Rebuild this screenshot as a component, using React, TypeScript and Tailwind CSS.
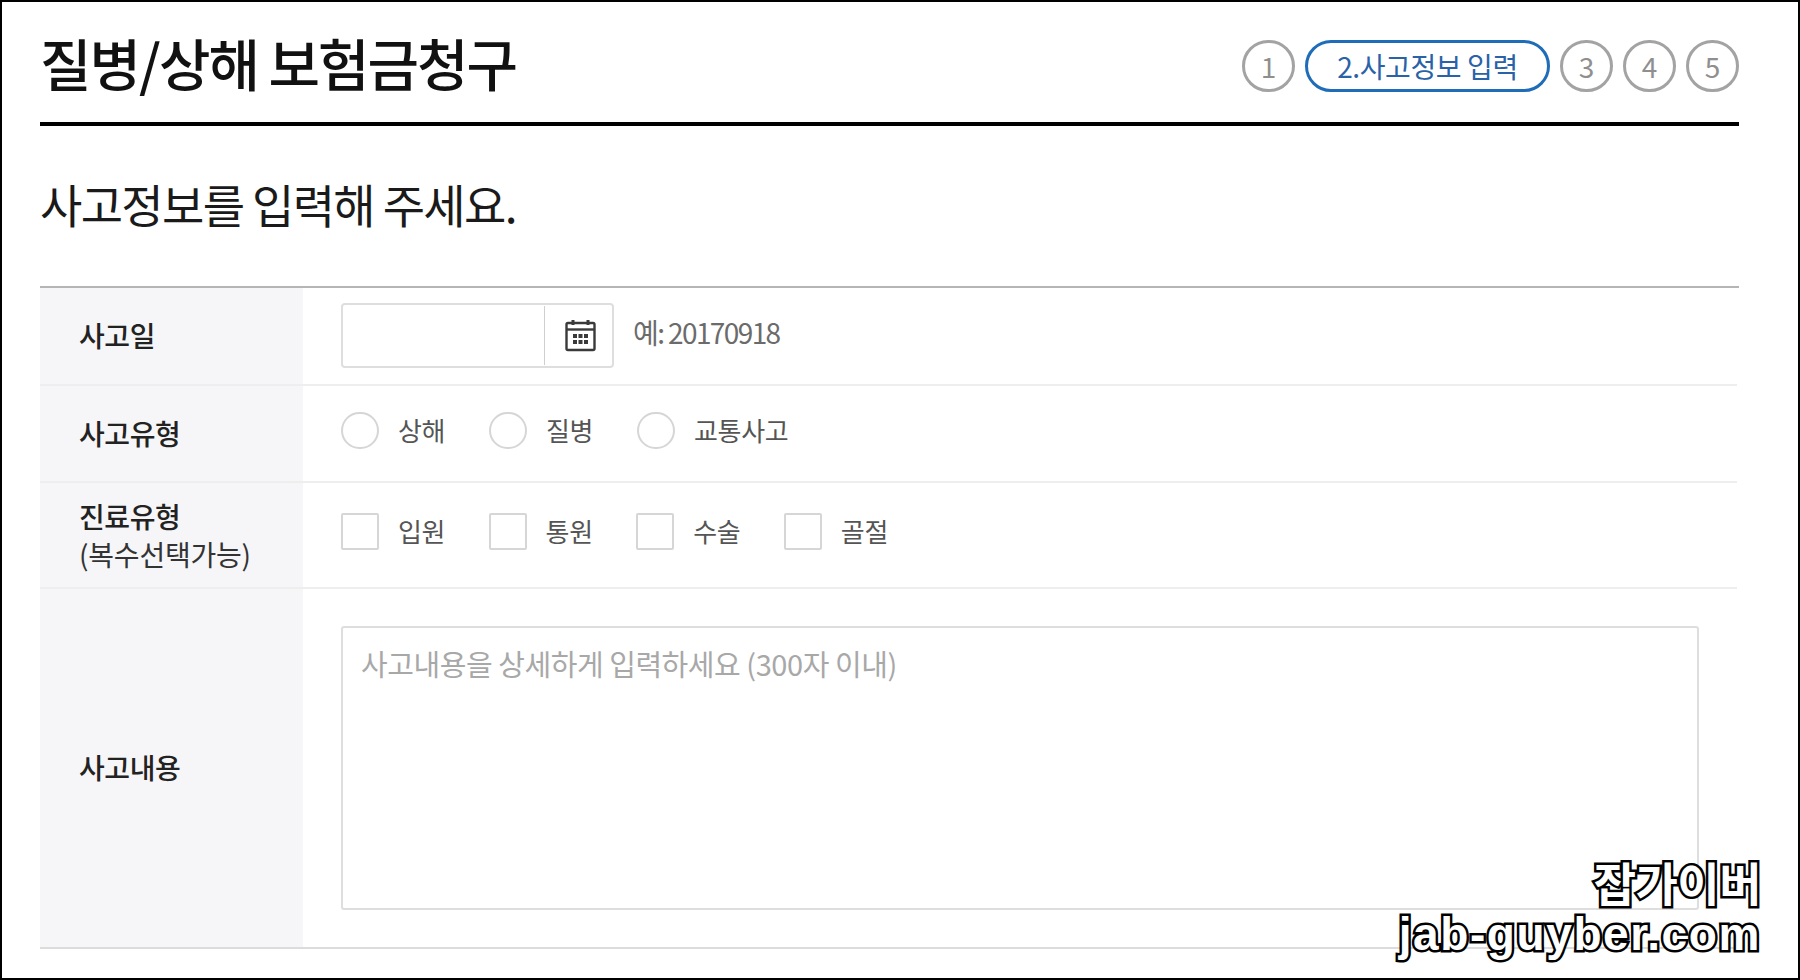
import React from 'react';

const font = "font-['Noto_Sans_CJK_KR','Noto_Sans',sans-serif]";

const CalendarIcon = () => (
  <svg width="33" height="33" viewBox="0 0 33 33" fill="none">
    <rect x="2.5" y="4" width="28" height="27" rx="1.5" stroke="#3a3a3a" strokeWidth="2.4" />
    <path d="M2.5 10.5H30.5" stroke="#3a3a3a" strokeWidth="2.4" />
    <path d="M9 1V6M24 1V6" stroke="#3a3a3a" strokeWidth="3" />
    <g fill="#3a3a3a">
      <rect x="9" y="15" width="4" height="4" />
      <rect x="14.5" y="15" width="4" height="4" />
      <rect x="20" y="15" width="4" height="4" />
      <rect x="9" y="21" width="4" height="4" />
      <rect x="14.5" y="21" width="4" height="4" />
      <rect x="20" y="21" width="4" height="4" />
    </g>
  </svg>
);

const StepCircle = ({ n }: { n: number }) => (
  <div className="w-[53px] h-[52px] rounded-full border-[3px] border-[#a3a3a3] flex items-center justify-center text-[28px] font-normal text-[#8f8f8f]">
    {n}
  </div>
);

const Option = ({ label, round }: { label: string; round?: boolean }) => (
  <label className={round ? 'w-[148px] flex items-center gap-[19px]' : 'w-[147.6px] flex items-center gap-[19px]'}>
    <span
      className={
        round
          ? 'shrink-0 w-[38px] h-[37px] rounded-full border-2 border-[#d6d6d6] bg-white'
          : 'shrink-0 w-[38px] h-[37px] rounded-[2px] border-2 border-[#d6d6d6] bg-white'
      }
    />
    <span className="text-[26px] leading-none whitespace-nowrap tracking-[-0.3px] text-[#555] -mt-[1px]">{label}</span>
  </label>
);

export default function App() {
  return (
    <div className={`${font} relative w-[1800px] h-[980px] bg-white border-2 border-black pl-[38px] pr-[59px] overflow-hidden text-[#222]`}>
      {/* Header */}
      <div className="h-[124px] border-b-4 border-black flex items-start justify-between">
        <h1 className="text-[56px] leading-[62px] mt-[29px] font-medium tracking-[-2px] text-[#111]">질병/상해 보험금청구</h1>
        <div className="flex items-center gap-[10px] mt-[38px]">
          <StepCircle n={1} />
          <div className="w-[245px] h-[52px] rounded-full border-[3px] border-[#1f6cb8] flex items-center justify-center text-[28px] tracking-[-0.4px] text-[#2a62a8]">
            2.사고정보 입력
          </div>
          <StepCircle n={3} />
          <StepCircle n={4} />
          <StepCircle n={5} />
        </div>
      </div>

      <h2 className="text-[46px] leading-[60px] mt-[47px] mb-[53px] font-normal tracking-[-1.65px] text-[#1a1a1a]">사고정보를 입력해 주세요.</h2>

      {/* Form table */}
      <div className="border-t-2 border-[#b5b5b5] border-b-2 border-b-[#dcdcdc]">
        <div className="grid grid-cols-[263px_1fr] h-[98px] mr-[2px] border-b-2 border-[#eeeeee]">
          <div className="bg-[#f6f6f8] pl-[39px] pb-[3px] flex items-center text-[28px] font-medium tracking-[-0.4px]">사고일</div>
          <div className="pl-[38px] flex items-center">
            <div className="w-[273px] h-[65px] -mt-[2px] rounded-[4px] border-2 border-[#dedede] flex">
              <input className="w-[201px] h-full outline-none bg-transparent" />
              <div className="w-px my-[1px] bg-[#cfcfcf]" />
              <div className="flex-1 flex items-center justify-center pl-[3px]">
                <CalendarIcon />
              </div>
            </div>
            <span className="ml-[19px] -mt-[8px] text-[28px] font-normal tracking-[-1.6px] text-[#6b6b6b]">예: 20170918</span>
          </div>
        </div>

        <div className="grid grid-cols-[263px_1fr] h-[97px] mr-[2px] border-b-2 border-[#eeeeee]">
          <div className="bg-[#f6f6f8] pl-[39px] pb-[2px] flex items-center text-[28px] font-medium tracking-[-0.4px]">사고유형</div>
          <div className="pl-[38px] pb-[6px] flex items-center">
            <Option round label="상해" />
            <Option round label="질병" />
            <Option round label="교통사고" />
          </div>
        </div>

        <div className="grid grid-cols-[263px_1fr] h-[106px] mr-[2px] border-b-2 border-[#eeeeee]">
          <div className="bg-[#f6f6f8] pl-[39px] pb-[1px] flex flex-col justify-center">
            <span className="text-[28px] leading-[38px] font-medium tracking-[-0.4px]">진료유형</span>
            <span className="text-[28px] leading-[38px] font-normal tracking-[-0.2px] text-[#333]">(복수선택가능)</span>
          </div>
          <div className="pl-[38px] pb-[8px] flex items-center">
            <Option label="입원" />
            <Option label="통원" />
            <Option label="수술" />
            <Option label="골절" />
          </div>
        </div>

        <div className="grid grid-cols-[263px_1fr] h-[358px]">
          <div className="bg-[#f6f6f8] pl-[39px] pb-[2px] flex items-center text-[28px] font-medium tracking-[-0.4px]">사고내용</div>
          <div className="pl-[38px] pt-[37px]">
            <textarea
              placeholder="사고내용을 상세하게 입력하세요 (300자 이내)"
              className="block w-[1358px] h-[284px] rounded-[3px] border-2 border-[#dedede] px-[18px] py-[16px] text-[29px] leading-[38px] font-normal tracking-[-0.45px] outline-none resize-none placeholder:text-[#a8a8a8]"
            />
          </div>
        </div>
      </div>

      {/* Watermark */}
      <div className="absolute right-[37px] top-[856px] flex flex-col items-end font-['Liberation_Sans',sans-serif] font-bold text-white text-right [-webkit-text-stroke:5px_#000] [paint-order:stroke_fill]">
        <span className="text-[46px] leading-[46px] tracking-[-0.5px] font-['Noto_Sans_CJK_KR',sans-serif]">잡가이버</span>
        <span className="text-[46px] leading-[46px] mt-[7px] tracking-[1.6px]">jab-guyber.com</span>
      </div>
    </div>
  );
}
